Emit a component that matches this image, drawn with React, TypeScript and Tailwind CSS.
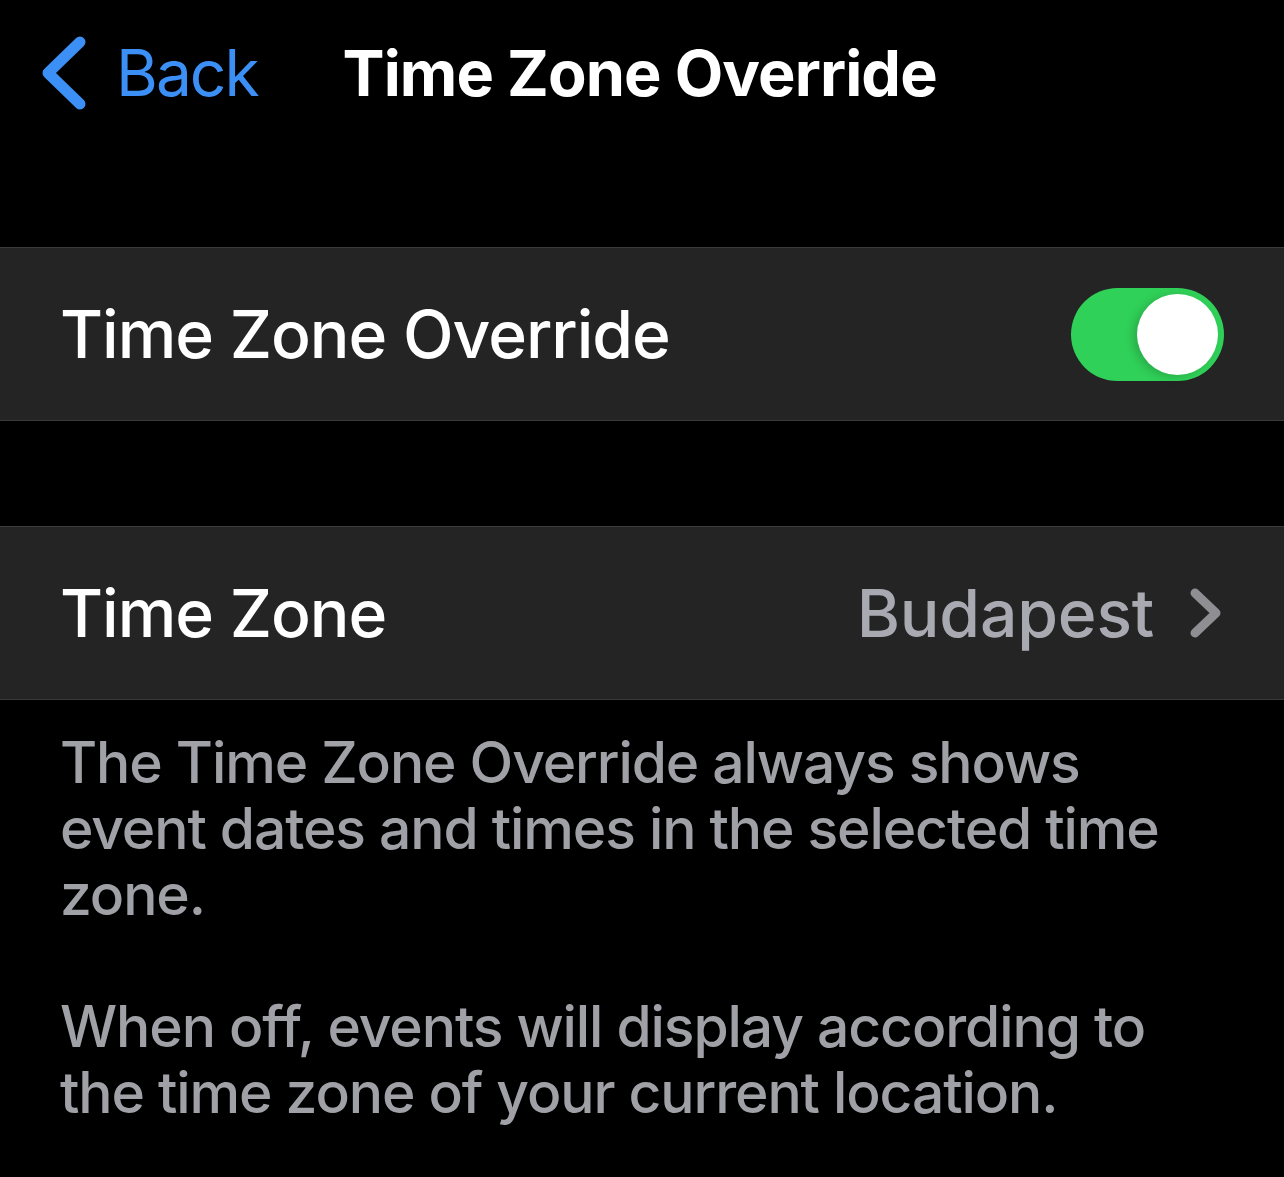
import React from 'react';

function Toggle({ on }: { on: boolean }) {
  return (
    <div
      className={`relative h-[93px] w-[153px] rounded-full ${on ? 'bg-[#30d158]' : 'bg-[#39393d]'}`}
    >
      <div className="absolute right-[6px] top-[6px] h-[81px] w-[81px] rounded-full bg-white shadow-[-4px_2px_10px_rgba(0,0,0,0.18)]" />
    </div>
  );
}

function Chevron({ className }: { className?: string }) {
  return (
    <svg viewBox="0 0 32 50" className={className} fill="none">
      <path d="M5 5 L26 25 L5 45" stroke="currentColor" strokeWidth="9" strokeLinecap="round" strokeLinejoin="round" />
    </svg>
  );
}

export default function App() {
  return (
    <div className="min-h-[1177px] w-full bg-black font-['Inter',sans-serif] text-white">
      {/* nav bar */}
      <div className="flex h-[146px] items-center">
        <div className="flex items-center pl-[41px] text-[#3b8ff5]">
          <svg viewBox="0 0 46 74" className="h-[74px] w-[46px]" fill="none">
            <path d="M39 6 L7 37 L39 68" stroke="currentColor" strokeWidth="11" strokeLinecap="round" strokeLinejoin="round" />
          </svg>
          <span className="ml-[29px] text-[64px] tracking-[-2px]">Back</span>
        </div>
        <h1 className="ml-[85px] text-[63px] font-bold tracking-[-0.9px]">Time Zone Override</h1>
      </div>

      <div className="h-[101px]" />

      <div className="flex h-[174px] items-center justify-between border-y border-[#3a3a3c] bg-[#242424] pl-[60px] pr-[60px]">
        <span className="text-[66px] font-medium tracking-[-1px]">Time Zone Override</span>
        <Toggle on />
      </div>

      <div className="h-[105px]" />

      <div className="flex h-[174px] items-center justify-between border-y border-[#3a3a3c] bg-[#242424] pl-[60px] pr-[62px]">
        <span className="text-[66px] font-medium tracking-[-1px]">Time Zone</span>
        <div className="flex items-center">
          <span className="text-[66px] font-medium tracking-[-0.2px] text-[#a9a9b1]">Budapest</span>
          <Chevron className="ml-[36px] h-[50px] w-[32px] text-[#8e8e93]" />
        </div>
      </div>

      <div className="px-[60px] pt-[30px] text-[57px] font-medium leading-[66px] tracking-[-1.1px] text-[#a0a0a7]">
        <p className="max-w-[1150px]">
          The Time Zone Override always shows event dates and times in the selected time zone.
        </p>
        <p className="mt-[66px] max-w-[1150px]">
          When off, events will display according to the time zone of your current location.
        </p>
      </div>
    </div>
  );
}
